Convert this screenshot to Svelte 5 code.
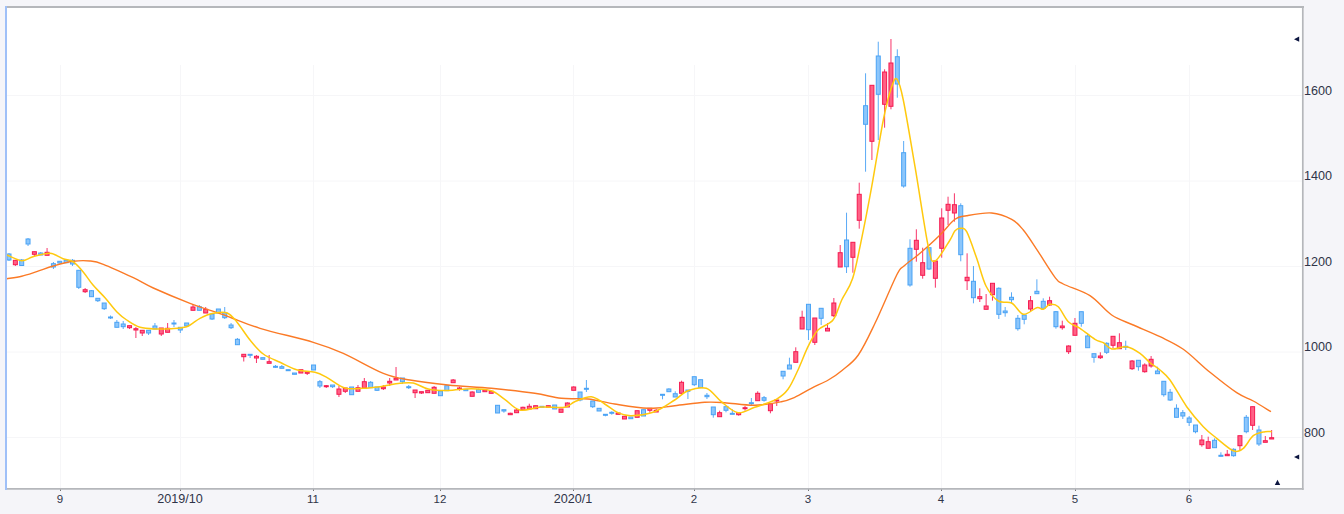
<script>
  // candle = [top, bottom, high, low, up] in plot pixels, one per trading day
  const B = 'b';
  const R = 'r';
  const candles = [
    [254,260,253,261,B],[260.3,264.7,260,266,R],[260,265.5,259,266,B],[239,244,238,246,B],[251.7,254.3,251.7,257,R],
    [253,255,252,255,B],[252.3,255.3,248,255.3,R],[263.7,267,262,269,B],[261.3,263,261.3,263,B],[260.3,262.7,260.3,262.7,B],
    [260.3,264,259,266,B],[270.3,287.3,270.3,289,B],[289.7,291.7,288,293,R],[290.7,296.7,290,297,B],[298.3,300.7,298.3,302,B],
    [303,308.7,303,310,B],[317,318,315.5,319,B],[322.3,327.3,320,327.3,B],[324,326.7,321,329,B],[325.7,327.7,325.7,329,R],
    [328.7,330,327,338,R],[330.3,333,330.3,336,R],[330.3,333,330.3,335,B],[326,329,323,329,B],[328,334,328,336,R],
    [328.3,332.3,323,332.3,R],[323,324,320,327,B],[327.3,330,327.3,333,B],[323,326,323,326,B],[307,310.3,304,310.3,R],
    [306.7,310.3,305,310.3,B],[309.3,313,307,313,R],[314,319,314,320,B],[309,313,309,313,B],[312.7,317.7,307,319,B],
    [325,327.7,323,329,B],[339.3,344.7,338,345,B],[354.3,356.7,354.3,361.5,R],[354.3,355.3,354.3,358,B],[356.3,358,355,363,R],
    [357.7,359.3,357.7,359.3,B],[361.7,363.3,355,363.3,R],[366.3,367.3,365,368,B],[366.7,368.3,365,368.3,B],[369.7,370.7,369.7,370.7,B],
    [373,374.3,373,374.3,B],[369.7,373,369.7,373,R],[372,373.3,372,375,R],[365,370,365,370,B],[381.7,386,380,388,B],
    [385.7,386.7,385,388,R],[385,386.7,385,388,B],[389,394.3,386,397,R],[388,391.3,388,393,R],[387,394.7,387,394.7,B],
    [387.7,391.3,385,391.3,R],[381.7,388,378,388,R],[382.3,387.7,381,387.7,B],[387,390.3,387,391,B],[387,388.7,385,390,R],
    [381.3,383,378,386,R],[378.3,380,367,380,R],[378,381.7,378,384,B],[386.7,387.7,385,389,B],[390,392.7,390,398,R],
    [391.7,393,391.7,394,R],[390.3,392.7,390.3,392.7,R],[387.3,393.3,386,393.3,R],[391,395.7,391,395.7,B],[385.7,390.7,385.7,390.7,B],
    [380,382.7,379,382.7,R],[388,389,386.7,390.7,R],[389.3,390.7,389.3,390.7,B],[392,396.3,391.3,396.3,R],[389.7,392.3,388.7,392.3,B],
    [390,391.7,389,391.7,R],[391.3,393.3,390.7,393.3,R],[405.3,413,405.3,413,B],[409.7,411,409.7,412.7,B],[413.3,414.7,412.7,414.7,R],
    [410,412.7,409,412.7,R],[407.3,409.7,406.7,409.7,R],[406.3,409,403.7,409,R],[405.7,408.7,405.7,408.7,R],[406.3,407.3,406.3,407.3,B],
    [405.7,407.3,405.7,407.3,R],[405,409,405,409,B],[409,412.3,409,412.3,R],[403,407,402.3,407,R],[387,390.3,386.3,390.3,R],
    [392,400,392,401.3,B],[388.3,389.3,380,392,B],[401,406.7,401,408,B],[408.3,411,408.3,411,B],[414.3,415.3,414.3,416.3,B],
    [412.3,413.3,411.3,414.7,B],[413,414.3,413,414.3,R],[416.3,419,416.3,419,R],[417,418.7,417,418.7,B],[410.7,417.3,410.7,417.3,R],
    [409.7,416,409.7,416,B],[408.3,410.3,408.3,412.7,R],[410.3,412,409,412,R],[394.3,395.3,394.3,399.3,B],[389,391.7,388.3,391.7,B],
    [393.7,397,391.3,397,B],[382.3,393.3,380.7,395,R],[390,391.3,390,399,B],[376.7,384.7,376.7,386,B],[379.7,387.7,379.7,387.7,B],
    [395.3,396.7,393,399,B],[407,414.7,407,417.7,B],[412.7,416.7,410.7,416.7,R],[406.7,410.3,406.7,412.3,B],[413.3,414.3,409.3,414.3,B],
    [412.7,414.7,412.7,415.7,R],[407.7,408.7,406,410.7,R],[402.7,403.7,398,405.3,B],[393.3,400.7,391.3,400.7,R],[397.7,400.3,396,401.7,B],
    [403.7,410.7,403.7,413.3,R],[400,401,400,406,R],[371.3,376,371.3,379.3,B],[365,369,357.7,369,B],[351.7,362.3,347.3,362.3,R],
    [317.3,329,310.7,329,R],[304.3,329.7,304.3,340,B],[318,342.3,318,345,R],[308.3,318.3,308.3,325,B],[328.3,331,323,331,R],
    [303,315.7,298,317,R],[252.7,267,245,267,R],[240,266.7,212.7,273,B],[242.3,257.3,242.3,272.7,R],[194.3,220.3,182.7,228.7,R],
    [105.7,124.3,73.3,171.7,B],[85.3,141.3,85.3,160,R],[56,94.3,41.7,140,B],[72,104.3,69.3,127.7,R],[63,106.3,39,109.3,R],
    [56.7,84,49.3,97.7,B],[152.7,186,141,187.7,B],[248.3,285,239.3,286.7,B],[240.3,249.3,229.3,261.7,R],[262.7,275.3,247.7,278.7,R],
    [247.7,269,247.7,270,B],[261,278.3,261,287.7,R],[218,248.3,208.3,257.7,R],[204.3,210.3,196.7,225,R],[204.7,213,193.3,221.7,R],
    [205.7,254.7,203.3,261.3,B],[277.3,280.7,253.3,290,R],[281.3,297.7,266,303.3,B],[296.7,298.7,288.3,302,R],[306,309.3,294,309.3,R],
    [283.3,294.7,283.3,300.7,R],[288.3,314.3,287.3,319,B],[311,312.7,307,316.7,B],[297.3,299.7,292.3,303.3,B],[318.3,328.7,315,330.7,B],
    [315,319.3,315,324.3,B],[300.7,309,296,311.7,R],[291.3,293.7,279.3,293.7,B],[301.3,308.3,298.3,308.3,B],[300.7,305,296.7,306,R],
    [311.7,326.7,311,328.7,B],[326,327.7,320.7,329.7,R],[346,351.7,345.3,354,R],[323.3,335.3,318,335.3,R],[311.7,323.3,311.7,326.7,B],
    [336,347.7,334,347.7,B],[353.7,357.3,353.7,362.7,B],[356,357.7,352.3,359,R],[343.3,352.3,342.3,354,B],[336.3,345.3,336.3,348.3,R],
    [342.7,348.7,333.3,348.7,R],[346.3,347.3,340.7,350,B],[361,368.7,360,370,R],[360.3,366.7,360.3,370.7,B],[365,371.7,363.3,372.7,R],
    [359.3,366,356,367.7,R],[371,373.7,366.7,373.7,B],[381.3,394.7,381.3,396.7,B],[392.3,400,389,401,B],[408.3,417.3,404.3,417.3,B],
    [412.7,416,410,419,B],[418,422.3,416,426,B],[425,431.7,425,433.3,B],[440,444.7,435,446.7,R],[441.7,448.3,436.7,448.3,R],
    [440.3,447.7,438.3,447.7,B],[455.3,456.3,452.3,456.3,B],[454.3,455.7,450,455.7,R],[449.3,455.7,448.3,456.7,B],[435.7,445.7,435.7,450,R],
    [417.3,431.7,415,433.3,B],[406.7,425.3,406.7,430,R],[430,444,425.7,446,B],[440.7,442.3,436,442.3,R],[437.7,439,430,439,R]
  ];

  const fast = [
    [7,255],[21.7,260.7],[33,256.7],[50,253.3],[63,258.7],[73,261.7],[83,271.7],[93,285],[105,297.7],[116.7,311.7],
    [126.7,320],[140,327.3],[156.7,329],[170,328.7],[186.7,326.7],[200,318.3],[213.3,313.3],[226.7,312.7],[236.7,321.7],
    [250,340],[263.3,354],[280,362.3],[296.7,369.7],[315,372.3],[326.7,377.3],[345,388],[363.3,388.3],[380,386.7],
    [400,383.3],[413.3,383],[428.3,389],[448,390.5],[471.3,388.7],[491.3,390.7],[504.7,399.3],[519.7,410],[541.3,407],
    [564.7,407.3],[574.7,401.7],[591.3,396.7],[604.7,404],[618,412.7],[631.3,415.7],[654.7,411.7],[674.7,400],[688,390.7],
    [706.3,388.3],[721.3,401.7],[738,412.7],[754.7,407.3],[776.3,399.3],[788,389.3],[798,370],[808,346.7],[818,330],
    [833,320],[841.7,300],[852.7,278.3],[861.7,238.3],[871.7,186.7],[883.3,120],[891.7,86.7],[897,79.3],[903.3,100],
    [915,166.7],[928.3,246.7],[935,261],[950,240],[955,230.7],[960.7,228.3],[966.7,231.7],[976.7,258.3],[986,286],
    [998.3,301],[1011.7,303],[1023.3,314.3],[1036.7,307.7],[1043.3,309.3],[1050,304.3],[1058.3,306.7],[1068.3,321.7],
    [1080,328.3],[1095,339.3],[1103.3,342.7],[1111.7,349],[1126.7,346.7],[1140,353.3],[1150,362.7],[1160,370],[1170,380],
    [1186.7,406.7],[1203.3,426.7],[1216.7,438.3],[1233.3,450.7],[1243.3,448.3],[1253.3,435.7],[1265,431.7],[1271.7,431.7]
  ];

  const slow = [
    [7,278.7],[21.7,276.3],[36.7,271.7],[53.3,266],[73.3,261.3],[90,261],[103.3,264.3],[133.3,277.7],[153.3,288],[190,303.3],
    [226.7,316],[260,328.3],[313.3,342.3],[343.3,353.3],[383.3,373.3],[410,380],[448,385],[491.3,388.3],[534.7,393.3],
    [561.3,398.3],[588,399],[614.7,404],[648,408.3],[674.7,405.7],[704.7,402.3],[724.7,402.7],[754.7,405.3],[781.3,401.7],
    [794.7,397.3],[811.3,388.3],[828.3,380],[841.7,370.7],[858.3,355],[875,323.3],[896.7,275],[904,266],[920,253.3],
    [940,235],[955,219.3],[966.7,215.7],[991.7,213],[1011.7,219.3],[1023.3,230],[1036.7,249.3],[1055,277.3],[1063.3,284],
    [1090,295.7],[1111.7,315],[1133.3,325],[1160,336.7],[1183.3,349.3],[1210,372.3],[1236.7,392.7],[1253.3,401],[1271,411.7]
  ];

  const months = [
    { x: 60, label: '9' },
    { x: 180, label: '2019/10', year: true },
    { x: 313, label: '11' },
    { x: 440, label: '12' },
    { x: 573, label: '2020/1', year: true },
    { x: 694, label: '2' },
    { x: 808, label: '3' },
    { x: 941, label: '4' },
    { x: 1075, label: '5' },
    { x: 1189, label: '6' }
  ];

  const prices = [
    { y: 95.5, label: '1600' },
    { y: 181, label: '1400' },
    { y: 266.5, label: '1200' },
    { y: 352, label: '1000' },
    { y: 437.5, label: '800' }
  ];

  const STEP = 6.345;

  // catmull-rom through the sampled points so the averages read as curves
  function smooth(pts) {
    let d = `M${pts[0][0]},${pts[0][1]}`;
    for (let i = 0; i < pts.length - 1; i++) {
      const p0 = pts[i - 1] || pts[i];
      const p1 = pts[i];
      const p2 = pts[i + 1];
      const p3 = pts[i + 2] || p2;
      const c1x = p1[0] + (p2[0] - p0[0]) / 6;
      const c1y = p1[1] + (p2[1] - p0[1]) / 6;
      const c2x = p2[0] - (p3[0] - p1[0]) / 6;
      const c2y = p2[1] - (p3[1] - p1[1]) / 6;
      d += ` C${c1x.toFixed(1)},${c1y.toFixed(1)} ${c2x.toFixed(1)},${c2y.toFixed(1)} ${p2[0]},${p2[1]}`;
    }
    return d;
  }
</script>

<div class="chart">
  <svg width="1344" height="514" viewBox="0 0 1344 514">
    <rect class="plot" x="6" y="7" width="1297" height="481" />

    {#each prices as p}
      <line class="grid" x1="6" x2="1303" y1={p.y} y2={p.y} />
      <text class="price" x="1304" y={p.y - 1}>{p.label}</text>
    {/each}
    {#each months as m}
      <line class="grid" x1={m.x + 0.5} x2={m.x + 0.5} y1="65" y2="488" />
      <line class="tick" x1={m.x + 0.5} x2={m.x + 0.5} y1="489" y2="491" />
      <text class="month" class:year={m.year} x={m.x} y="503">{m.label}</text>
    {/each}

    {#each candles as c, i}
      {@const x = 9 + STEP * i}
      <g class={c[4] === R ? 'down' : 'up'}>
        <line x1={x} x2={x} y1={c[2]} y2={c[3]} />
        <rect x={x - 2} y={c[0]} width="4" height={c[1] - c[0]} />
      </g>
    {/each}

    <path class="ma slow" d={smooth(slow)} />
    <path class="ma fast" d={smooth(fast)} />

    <line class="edge" x1="5" x2="1304" y1="7" y2="7" />
    <line class="edge thin" x1="1302.8" x2="1302.8" y1="6" y2="490" />
    <line class="edge thin" x1="5" x2="1303.5" y1="488.8" y2="488.8" />
    <line class="edge left" x1="6" x2="6" y1="6" y2="490" />

    <polygon class="mark" points="1294,39.2 1299.2,36.6 1299.2,41.8" />
    <polygon class="mark" points="1294,457 1299.2,454.4 1299.2,459.6" />
    <polygon class="mark" points="1277.5,479.8 1274.8,485 1280.2,485" />
  </svg>
</div>

<style>
  :global(body) {
    background: #f5f5f9;
  }

  .chart {
    width: 1344px;
    height: 514px;
    overflow: hidden;
    font-family: "Liberation Sans", Arial, sans-serif;
  }

  svg {
    display: block;
  }

  .plot {
    fill: #fff;
  }

  .grid {
    stroke: #f6f6f8;
    stroke-width: 1;
  }

  .tick {
    stroke: #777;
    stroke-width: 1;
  }

  .edge {
    stroke: #b5b7bb;
    stroke-width: 2;
  }

  .edge.thin {
    stroke-width: 1.7;
  }

  .edge.left {
    stroke: #9fc0f8;
  }

  .price {
    font-size: 12.6px;
    fill: #2f3448;
  }

  .month {
    font-size: 11.5px;
    fill: #2f3448;
    text-anchor: middle;
  }

  .month.year {
    font-size: 12.6px;
  }

  .up line {
    stroke: #5aaaf6;
  }

  .up rect {
    fill: #8cc6fb;
    stroke: #4aa3f5;
  }

  .down line {
    stroke: #f7356a;
  }

  .down rect {
    fill: #ff6186;
    stroke: #f5194f;
  }

  .ma {
    fill: none;
    stroke-linejoin: round;
  }

  .fast {
    stroke: #ffc90e;
    stroke-width: 1.5;
  }

  .slow {
    stroke: #fb7a26;
    stroke-width: 1.4;
  }

  .mark {
    fill: #0d1640;
  }
</style>
